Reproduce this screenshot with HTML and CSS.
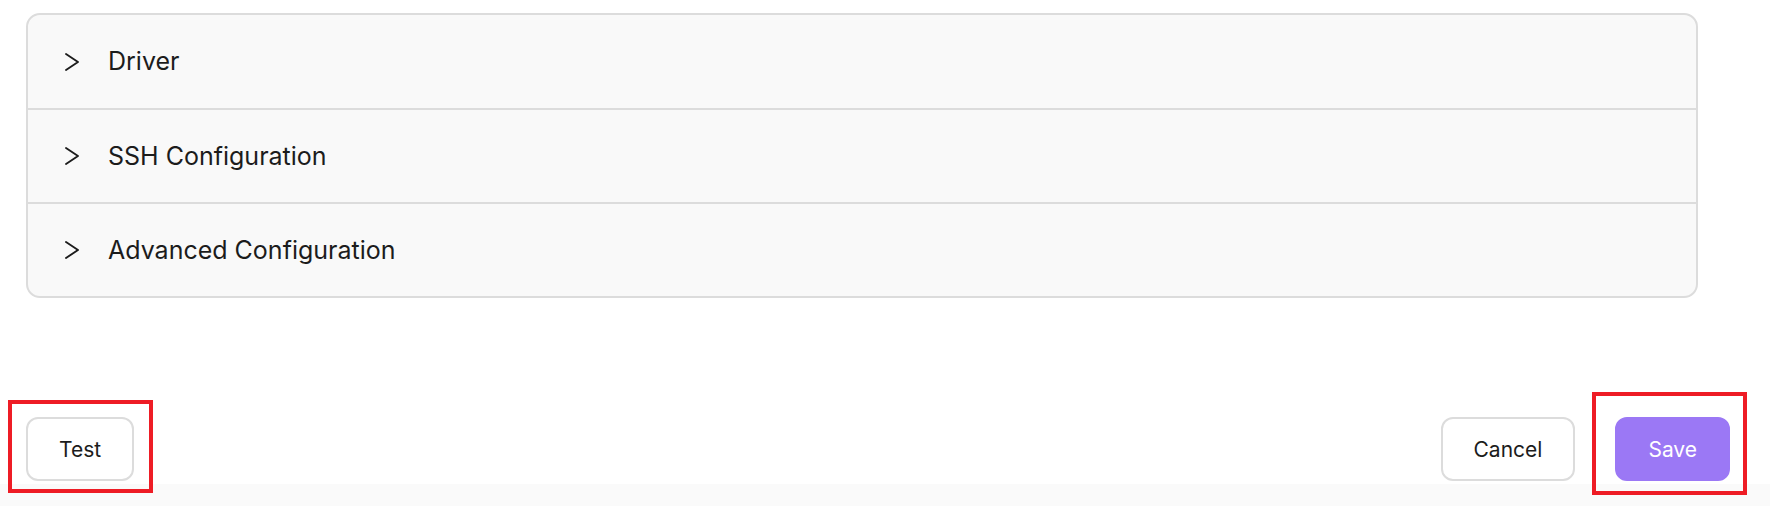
FILE: index.html
```html
<!DOCTYPE html>
<html lang="en">
  <head>
    <meta charset="UTF-8" />
    <meta name="viewport" content="width=device-width, initial-scale=1.0" />
    <title>Connection Settings</title>
    <link rel="stylesheet" href="styles.css">
  </head>
  <body>
    <div class="page">
      <!-- Collapsible sections -->
      <div class="accordion">
        <div class="section">
          <svg class="chevron" viewBox="0 0 24 24"><path d="M6 4l12 8-12 8" /></svg>
          <span class="section-title">Driver</span>
        </div>
        <div class="section">
          <svg class="chevron" viewBox="0 0 24 24"><path d="M6 4l12 8-12 8" /></svg>
          <span class="section-title">SSH Configuration</span>
        </div>
        <div class="section">
          <svg class="chevron" viewBox="0 0 24 24"><path d="M6 4l12 8-12 8" /></svg>
          <span class="section-title">Advanced Configuration</span>
        </div>
      </div>

      <div class="actions">
        <button class="btn">Test</button>
        <div class="actions-right">
          <button class="btn">Cancel</button>
          <button class="btn primary">Save</button>
        </div>
      </div>

      <div class="footer-band"></div>
    </div>

    <!-- highlight marks -->
    <div class="mark mark-test"></div>
    <div class="mark mark-save"></div>
  </body>
</html>
```

FILE: styles.css
```css
* {
  margin: 0;
  padding: 0;
  box-sizing: border-box;
}
html,
body {
  height: 100%;
  width: 100%;
  background: #fff;
  font-family: Inter, "Noto Sans", sans-serif;
  color: #1c1c1c;
  overflow: hidden;
}

.page {
  position: relative;
  height: 100%;
  display: flex;
  flex-direction: column;
}

.accordion {
  margin: 13px 72px 0 26px;
  border: 2px solid #dcdcdc;
  border-radius: 14px;
  background: #f9f9f9;
  overflow: hidden;
}

.section {
  height: 94px;
  display: flex;
  align-items: center;
  padding-left: 32px;
  border-top: 2px solid #dcdcdc;
}
.section:first-child {
  height: 93px;
  border-top: none;
}

.chevron {
  width: 24px;
  height: 24px;
  fill: none;
  stroke: #1c1c1c;
  stroke-width: 1.9;
  stroke-linecap: round;
  stroke-linejoin: round;
  margin-right: 24px;
}

.section-title {
  font-size: 25px;
  line-height: 1;
}

.actions {
  display: flex;
  justify-content: space-between;
  align-items: center;
  margin-top: 119px;
  padding: 0 40px 0 26px;
}

.actions-right {
  display: flex;
  gap: 40px;
}

.btn {
  height: 64px;
  padding: 0 31px;
  border: 2px solid #dcdcdc;
  border-radius: 12px;
  background: #fff;
  font-family: Inter, "Noto Sans", sans-serif;
  font-size: 21px;
  color: #1c1c1c;
}

.btn.primary {
  background: #9b78f5;
  border-color: #9b78f5;
  color: #fff;
}

.footer-band {
  margin-top: auto;
  height: 22px;
  background: #fafafa;
}

.mark {
  position: absolute;
  border: 4px solid #ee1c25;
  pointer-events: none;
}
.mark-test {
  left: 8px;
  top: 400px;
  width: 145px;
  height: 93px;
}
.mark-save {
  left: 1592px;
  top: 392px;
  width: 155px;
  height: 103px;
}
```
